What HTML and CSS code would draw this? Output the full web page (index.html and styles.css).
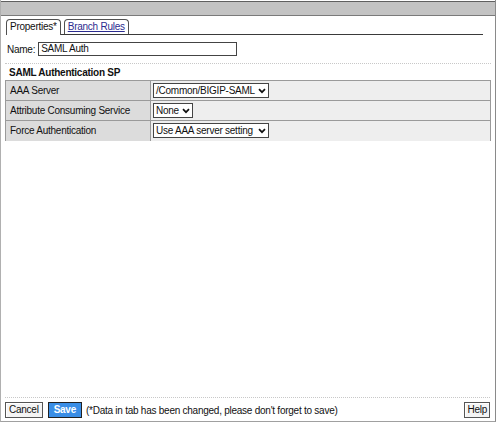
FILE: index.html
```html
<!DOCTYPE html>
<html>
<head>
<meta charset="utf-8">
<link rel="stylesheet" href="styles.css">
</head>
<body>
<div class="frame">
  <div class="titlebar"></div>
  <div class="tabs">
    <span class="tab active">Properties*</span>
    <a class="tab link">Branch Rules</a>
  </div>
  <div class="content">
    <div class="name-row">
      <label>Name:</label>
      <span class="input">SAML Auth</span>
    </div>
    <div class="section-title">SAML Authentication SP</div>
    <table class="props">
      <tr>
        <td class="key">AAA Server</td>
        <td class="val"><span class="select"><span class="txt">/Common/BIGIP-SAML</span><svg class="chev" width="8" height="6" viewBox="0 0 8 6"><polyline points="1,1.2 4,4.2 7,1.2" fill="none" stroke="#111" stroke-width="1.7"/></svg></span></td>
      </tr>
      <tr>
        <td class="key">Attribute Consuming Service</td>
        <td class="val"><span class="select"><span class="txt">None</span><svg class="chev" width="8" height="6" viewBox="0 0 8 6"><polyline points="1,1.2 4,4.2 7,1.2" fill="none" stroke="#111" stroke-width="1.7"/></svg></span></td>
      </tr>
      <tr>
        <td class="key">Force Authentication</td>
        <td class="val"><span class="select wide"><span class="txt">Use AAA server setting</span><svg class="chev" width="8" height="6" viewBox="0 0 8 6"><polyline points="1,1.2 4,4.2 7,1.2" fill="none" stroke="#111" stroke-width="1.7"/></svg></span></td>
      </tr>
    </table>
  </div>
  <div class="footer">
    <span class="btn cancel">Cancel</span>
    <span class="btn save">Save</span>
    <span class="note">(*Data in tab has been changed, please don't forget to save)</span>
    <span class="btn help">Help</span>
  </div>
</div>
</body>
</html>
```
FILE: styles.css
```css
html, body {
  margin: 0;
  padding: 0;
  background: #ffffff;
}
body {
  font-family: "Liberation Sans", Arial, sans-serif;
  font-size: 10px;
  letter-spacing: -0.25px;
  color: #111;
  white-space: nowrap;
}
.frame {
  width: 496px;
  height: 422px;
  box-sizing: border-box;
  border-left: 1px solid #b0b0b0;
  border-right: 1px solid #8a8a8a;
  border-bottom: 1px solid #a0a0a0;
  display: flex;
  flex-direction: column;
}
.titlebar {
  height: 13px;
  margin-top: 1px;
  background: #c3c3c3;
  border-top: 1px solid #606060;
  border-bottom: 1px solid #7a7a7a;
}
.tabs {
  margin: 3px 12px 0 5px;
  height: 15px;
  border-bottom: 1px solid #3a3a3a;
  display: flex;
  align-items: flex-end;
  gap: 3px;
}
.tab {
  box-sizing: border-box;
  height: 15px;
  padding: 0 3px;
  line-height: 14px;
  border: 1px solid #505050;
  border-bottom: none;
  border-radius: 4px 4px 0 0;
  background: #fff;
}
.tab.active {
  height: 16px;
  margin-bottom: -1px;
}
.tab.link {
  color: #2b2b8f;
  text-decoration: underline;
}
.content {
  flex: 1;
  margin: 0 4px 0 4px;
}
.name-row {
  display: flex;
  align-items: center;
  margin-top: 7px;
  padding-left: 2px;
  height: 14px;
  gap: 3px;
}
.input {
  box-sizing: border-box;
  width: 199px;
  height: 14px;
  border: 1px solid #444;
  padding-left: 2px;
  line-height: 12px;
}
.section-title {
  margin-top: 7px;
  border-top: 1px dotted #c8c8c8;
  padding: 3px 0 0 4px;
  height: 13px;
  font-weight: bold;
}
.props {
  width: 486px;
  border-collapse: collapse;
  margin-top: 0;
}
.props td {
  height: 20px;
  padding: 0 0 0 4px;
  border: 1px solid #9a9a9a;
  box-sizing: border-box;
}
.props tr:last-child td {
  border-bottom: none;
}
.props td.key {
  width: 145px;
  background: #dcdcdc;
}
.props td.val {
  background: #eeeeee;
  padding-left: 2px;
}
.select {
  box-sizing: border-box;
  display: inline-flex;
  align-items: center;
  gap: 3px;
  height: 15px;
  padding: 0 2px 0 2px;
  border: 1px solid #444;
  background: #fff;
  vertical-align: middle;
}
.select.wide {
  gap: 5px;
}
.chev {
  flex-shrink: 0;
  display: block;
}
.footer {
  margin: 0 5px 3px 4px;
  border-top: 1px dotted #c8c8c8;
  padding-top: 4px;
  display: flex;
  align-items: center;
  height: 16px;
}
.btn {
  box-sizing: border-box;
  height: 16px;
  line-height: 14px;
  padding: 0 3px;
  text-align: center;
  border: 1px solid #555;
  background: #f4f4f4;
  box-shadow: inset 1px 1px 0 #fff;
}
.btn.save {
  margin-left: 5px;
  padding: 0 5px;
  background: #3a8ee6;
  color: #fff;
  font-weight: bold;
  border-color: #222;
  box-shadow: none;
}
.note {
  margin-left: 4px;
}
.btn.help {
  padding: 0 2px;
  margin-left: auto;
}
```
